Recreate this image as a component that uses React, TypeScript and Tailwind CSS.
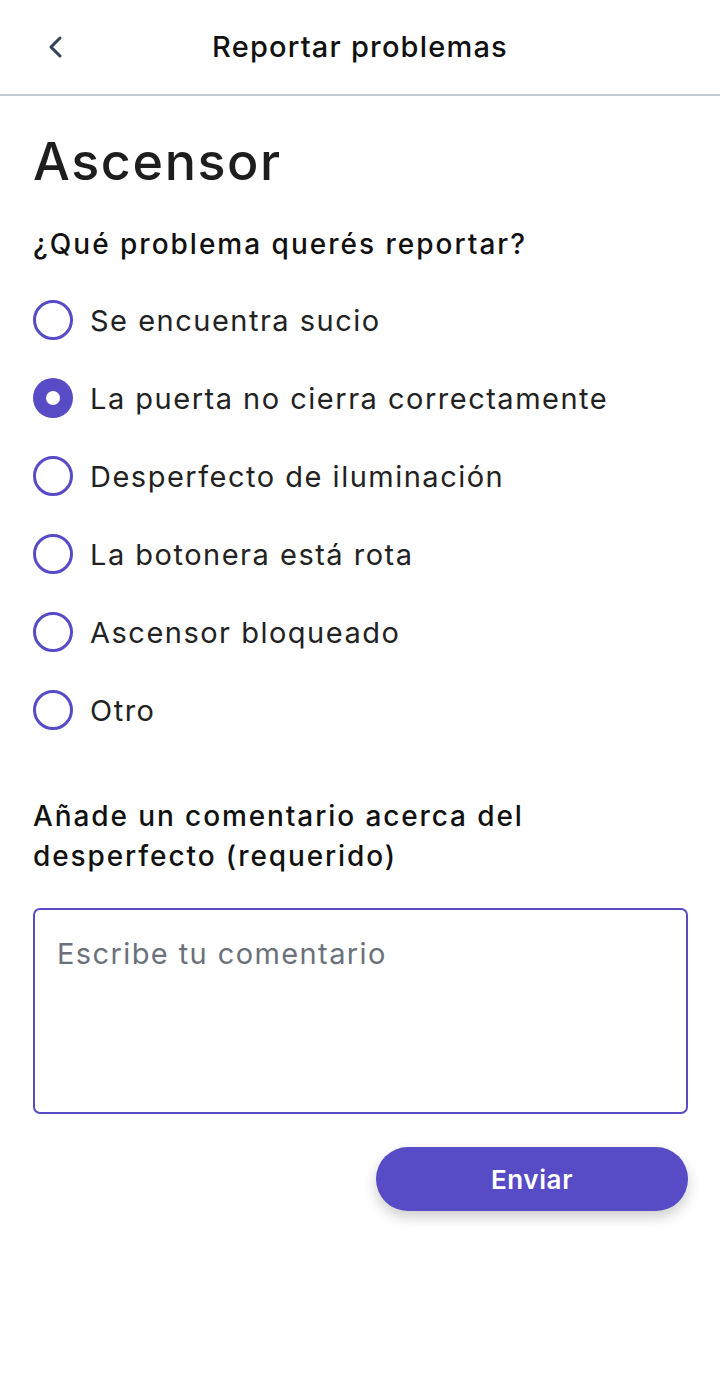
import { useState } from 'react';

const options = [
  'Se encuentra sucio',
  'La puerta no cierra correctamente',
  'Desperfecto de iluminación',
  'La botonera está rota',
  'Ascensor bloqueado',
  'Otro',
];

function Radio({ checked }: { checked: boolean }) {
  return checked ? (
    <span className="w-[40px] h-[40px] rounded-full bg-[#574bc6] flex items-center justify-center shrink-0">
      <span className="w-[14px] h-[14px] rounded-full bg-white" />
    </span>
  ) : (
    <span className="w-[40px] h-[40px] rounded-full border-[3px] border-[#574bc6] shrink-0" />
  );
}

export default function App() {
  const [selected, setSelected] = useState(1);

  return (
    <div className="min-h-screen bg-white text-[#1c1c1c] font-['Inter',sans-serif]">
      <header className="h-[96px] border-b-2 border-[#c3ccd5] flex items-center relative">
        <button className="absolute left-[44px] top-[32px] text-[#33415c]">
          <svg width="24" height="30" viewBox="0 0 24 30" fill="none">
            <path d="M16 6 L7 15 L16 24" stroke="currentColor" strokeWidth="3" strokeLinecap="round" strokeLinejoin="round" />
          </svg>
        </button>
        <h1 className="w-full text-center text-[29px] font-medium tracking-[1.2px] text-[#111]">Reportar problemas</h1>
      </header>

      <main className="px-[33px]">
        <h2 className="text-[52px] font-medium leading-none mt-[40px] tracking-[1.6px] text-[#1e1e1e]">Ascensor</h2>
        <p className="text-[28px] font-medium mt-[36px] leading-[40px] tracking-[2px] text-[#111]">¿Qué problema querés reportar?</p>

        <div className="mt-[17px] flex flex-col">
          {options.map((o, i) => (
            <label key={o} className="h-[78px] flex items-center gap-[17px] cursor-pointer" onClick={() => setSelected(i)}>
              <Radio checked={i === selected} />
              <span className="text-[29px] leading-none tracking-[1.5px] text-[#222]">{o}</span>
            </label>
          ))}
        </div>

        <p className="text-[28px] font-medium mt-[47px] leading-[40px] tracking-[1.9px] text-[#111]">
          Añade un comentario acerca del
          <br />
          desperfecto (requerido)
        </p>

        <textarea
          placeholder="Escribe tu comentario"
          className="mt-[32px] w-[655px] h-[206px] block border-2 border-[#574bc6] rounded-[7px] px-[22px] py-[24px] text-[29px] leading-[40px] tracking-[1.4px] placeholder:text-[#6b717b] resize-none outline-none"
        />

        <div className="flex justify-end mt-[33px]">
          <button className="w-[312px] h-[64px] rounded-full bg-[#574bc6] text-white text-[26px] font-semibold tracking-[0.6px] shadow-[0_6px_14px_rgba(0,0,0,0.2)] mr-[-1px]">
            Enviar
          </button>
        </div>
      </main>
    </div>
  );
}
